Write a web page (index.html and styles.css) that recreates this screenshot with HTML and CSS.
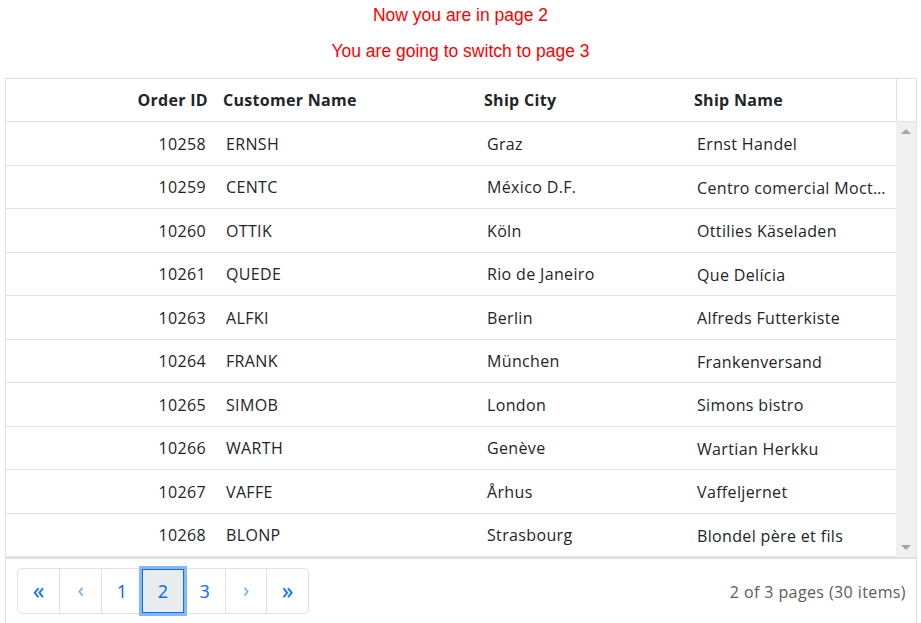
FILE: index.html
```html
<!DOCTYPE html>
<html>
<head>
<meta charset="utf-8">
<link rel="stylesheet" href="styles.css">
</head>
<body>
<div class="msg msg1">Now you are in page 2</div>
<div class="msg msg2">You are going to switch to page 3</div>
<div class="grid">
  <div class="head">
    <div class="hc right">Order ID</div>
    <div class="hc">Customer Name</div>
    <div class="hc">Ship City</div>
    <div class="hc">Ship Name</div>
    <div class="hgutter"></div>
  </div>
  <div class="bodywrap">
    <div class="rows">
      <div class="row"><div class="c right">10258</div><div class="c">ERNSH</div><div class="c">Graz</div><div class="c">Ernst Handel</div></div>
      <div class="row"><div class="c right">10259</div><div class="c">CENTC</div><div class="c">México D.F.</div><div class="c">Centro comercial Moctezuma</div></div>
      <div class="row"><div class="c right">10260</div><div class="c">OTTIK</div><div class="c">Köln</div><div class="c">Ottilies Käseladen</div></div>
      <div class="row"><div class="c right">10261</div><div class="c">QUEDE</div><div class="c">Rio de Janeiro</div><div class="c">Que Delícia</div></div>
      <div class="row"><div class="c right">10263</div><div class="c">ALFKI</div><div class="c">Berlin</div><div class="c">Alfreds Futterkiste</div></div>
      <div class="row"><div class="c right">10264</div><div class="c">FRANK</div><div class="c">München</div><div class="c">Frankenversand</div></div>
      <div class="row"><div class="c right">10265</div><div class="c">SIMOB</div><div class="c">London</div><div class="c">Simons bistro</div></div>
      <div class="row"><div class="c right">10266</div><div class="c">WARTH</div><div class="c">Genève</div><div class="c">Wartian Herkku</div></div>
      <div class="row"><div class="c right">10267</div><div class="c">VAFFE</div><div class="c">Århus</div><div class="c">Vaffeljernet</div></div>
      <div class="row last"><div class="c right">10268</div><div class="c">BLONP</div><div class="c">Strasbourg</div><div class="c">Blondel père et fils</div></div>
    </div>
    <div class="scrollbar">
      <div class="arrow up"></div>
      <div class="arrow down"></div>
    </div>
  </div>
  <div class="footer">
    <div class="pager">
      <div class="pb big">«</div>
      <div class="pb thin">‹</div>
      <div class="pb">1</div>
      <div class="pb active">2</div>
      <div class="pb">3</div>
      <div class="pb thin">›</div>
      <div class="pb big">»</div>
    </div>
    <div class="info">2 of 3 pages (30 items)</div>
  </div>
</div>
</body>
</html>
```
FILE: styles.css
```css
html, body {
  margin: 0;
  padding: 0;
  background: #fff;
  overflow: hidden;
}
body {
  font-family: "Open Sans", "Noto Sans", sans-serif;
  color: #212529;
}
.msg {
  font-family: "Liberation Sans", Arial, sans-serif;
  font-size: 17.5px;
  color: #ff0000;
  text-align: center;
  height: 20px;
  line-height: 20px;
}
.msg1 { padding-top: 5px; }
.msg2 { margin-top: 16px; }
.grid {
  margin: 17px 4px 0 5px;
  border: 1px solid #dee2e6;
  border-bottom: none;
}
.head {
  display: grid;
  grid-template-columns: 210px 261px 210px 209px 1fr;
  height: 42px;
  border-bottom: 1px solid #dee2e6;
  font-weight: 700;
  font-size: 16px;
}
.hc {
  display: flex;
  align-items: center;
  padding: 0 8px 0 7px;
  letter-spacing: 0.3px;
}
.hc.right { justify-content: flex-end; }
.hgutter { border-left: 1px solid #dee2e6; }
.bodywrap {
  display: flex;
}
.rows { flex: 1; }
.row {
  display: grid;
  grid-template-columns: 210px 261px 210px 209px;
  height: 42.5px;
  border-bottom: 1px solid #dee2e6;
  font-size: 16px;
}
.c {
  display: flex;
  align-items: center;
  padding: 1px 10px 0;
  white-space: nowrap;
  overflow: hidden;
  letter-spacing: 0.35px;
}
.c:last-child {
  display: block;
  line-height: 42.5px;
  text-overflow: ellipsis;
  padding-right: 8px;
}
.c.right { justify-content: flex-end; }
.scrollbar {
  width: 21px;
  background: #f0f0f0;
  display: flex;
  flex-direction: column;
  justify-content: space-between;
  align-items: center;
  padding: 7px 0 7px;
  box-sizing: border-box;
}
.arrow {
  width: 0;
  height: 0;
  border-left: 5px solid transparent;
  border-right: 5px solid transparent;
}
.arrow.up { border-bottom: 5px solid #a3a3a3; }
.arrow.down { border-top: 5px solid #a3a3a3; }
.footer {
  border-top: 2px solid #dee2e6;
  display: flex;
  justify-content: space-between;
  align-items: flex-start;
  padding: 9px 10px 12px 11px;
}
.pager {
  display: flex;
  border: 1px solid #dee2e6;
  border-radius: 5px;
  height: 44px;
}
.pb {
  width: 41.4px;
  height: 44px;
  display: flex;
  align-items: center;
  justify-content: center;
  color: #0d6efd;
  font-size: 18px;
  border-left: 1px solid #dee2e6;
  box-sizing: border-box;
  font-family: "Noto Sans", "Open Sans", sans-serif;
}
.pb:first-child { border-left: none; }
.pb.big { font-size: 23px; font-weight: 400; padding-bottom: 3px; }
.pb.thin { color: #6ea8fe; font-size: 20px; padding-bottom: 3px; }
.pb.active {
  background: #e9ecef;
  border: 1px solid #0d6efd;
  box-shadow: 0 0 0 3px #86b7fe;
  position: relative;
  z-index: 1;
}
.info {
  align-self: center;
  color: #5c5c5c;
  font-size: 16px;
  letter-spacing: 0.4px;
  margin-top: 1px;
}
```
